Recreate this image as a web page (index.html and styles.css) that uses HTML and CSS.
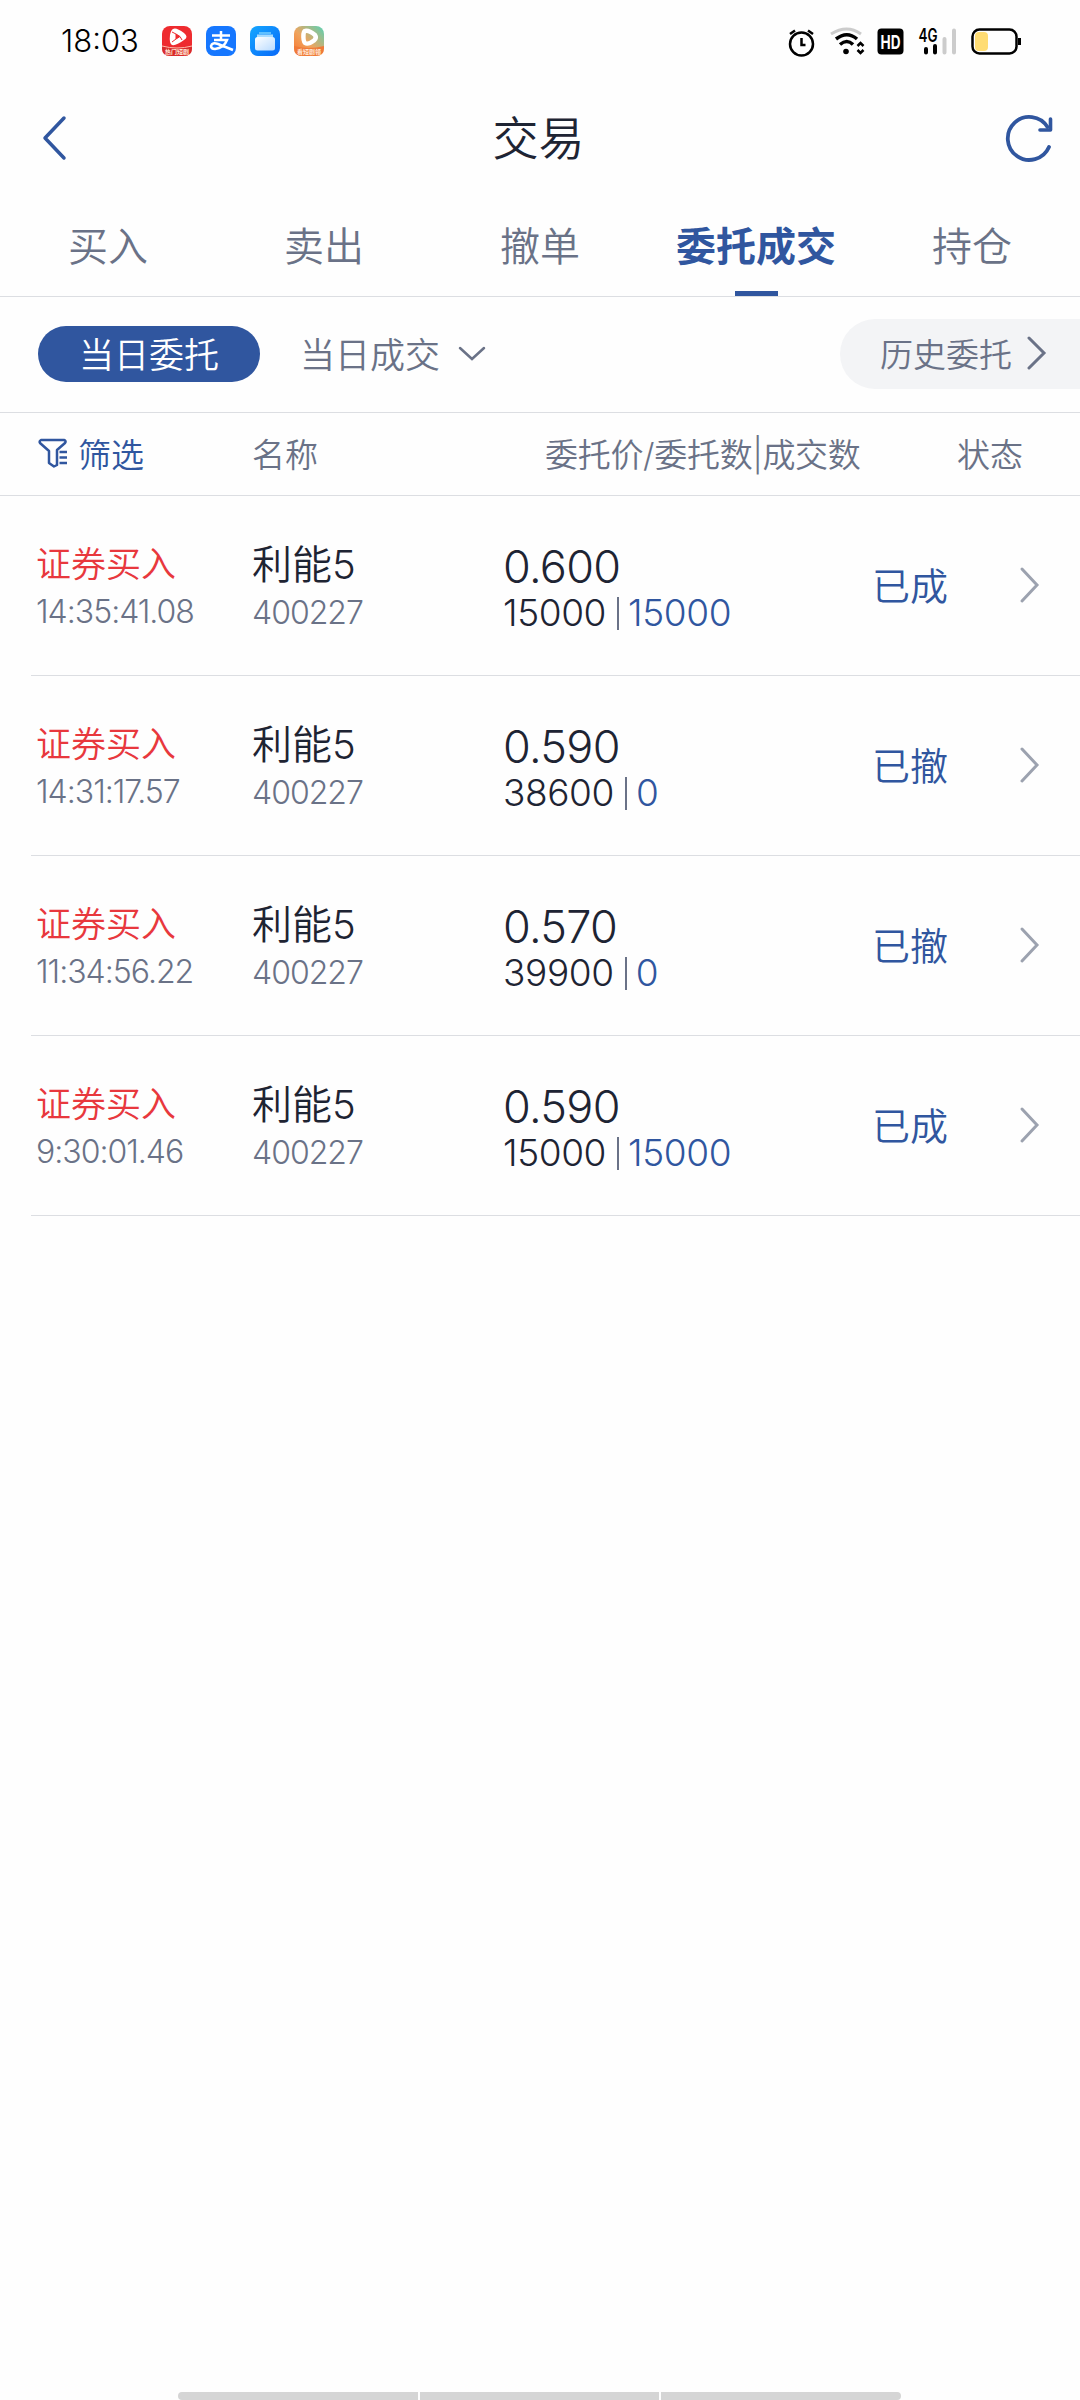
FILE: index.html
```html
<!DOCTYPE html>
<html lang="zh-CN">
<head>
    <meta charset="UTF-8">
    <meta name="viewport" content="width=device-width, initial-scale=1.0">
    <title>交易</title>
    <link rel="stylesheet" href="styles.css">
</head>
<body>
    <div class="status-bar">
        <span class="clock">18:03</span>
        <div class="app-icons">
            <svg width="30" height="30" viewBox="0 0 30 30">
                <rect width="30" height="30" rx="8" fill="#ee2b2f"/>
                <path d="M0 20Q15 24 30 20V22Q30 30 22 30H8Q0 30 0 22Z" fill="#d92a2c"/>
                <path d="M0 20Q15 24 30 20" fill="none" stroke="#ffb9a8" stroke-width="1"/>
                <path d="M11 3Q14 1 22 7Q27 11 22 14Q14 20 10 19Q7 17 8 9Q9 4 11 3Z" fill="#fff"/>
                <path d="M14 8L18 10.500L14 13ZM10 6L14 8M18 10.500L20 14M14 13L10 16" fill="#ee2b2f" stroke="#ee2b2f" stroke-width="1"/>
                <text class="icon-caption" x="15" y="28" text-anchor="middle">热门短剧</text>
            </svg>
            <svg width="30" height="30" viewBox="0 0 30 30">
                <rect width="30" height="30" rx="8" fill="#1677ff"/>
                <path d="M6 9.500H24M15 5V14M8 14H21Q18 22 9 23Q5 23 5 20Q6 16 12 18L27 24" fill="none" stroke="#fff" stroke-width="2.500"/>
            </svg>
            <svg width="30" height="30" viewBox="0 0 30 30">
                <defs>
                    <linearGradient id="blue" x1="0" y1="0" x2="1" y2="1"><stop stop-color="#15a7ff"/><stop offset="1" stop-color="#0868f8"/></linearGradient>
                    <linearGradient id="sheet" x1="0" y1="0" x2="1" y2="1"><stop stop-color="#fff"/><stop offset="1" stop-color="#b9dbff"/></linearGradient>
                    <linearGradient id="sunset" x1="0" y1="1" x2="1" y2="0"><stop stop-color="#f9722b"/><stop offset=".45" stop-color="#efa45e"/><stop offset="1" stop-color="#55d3b6"/></linearGradient>
                </defs>
                <rect width="30" height="30" rx="8" fill="url(#blue)"/>
                <path d="M9 6H21V8H9Z" fill="#5fc0ff"/>
                <path d="M7 8.500H23V11H7Z" fill="#a8dcff"/>
                <rect x="5" y="11" width="20" height="13.500" rx="2.500" fill="url(#sheet)"/>
            </svg>
            <svg width="30" height="30" viewBox="0 0 30 30">
                <rect width="30" height="30" rx="8" fill="url(#sunset)"/>
                <path d="M0 20Q15 24 30 20V22Q30 30 22 30H8Q0 30 0 22Z" fill="#f07a38"/>
                <path d="M11 5Q15 4 21 9Q23 12 20 14.500Q14 19 11 17Q9 15 9.500 8Q10 5 11 5Z" fill="none" stroke="#fff" stroke-width="4.500"/>
                <text class="icon-caption" x="15" y="28" text-anchor="middle">看短剧领</text>
            </svg>
        </div>
        <div class="system-icons">
            <svg width="270" height="40" viewBox="770 20 270 40" fill="none" stroke="#000" stroke-width="2.500">
                <circle cx="801.500" cy="43" r="11.500"/>
                <path d="M801.500 37V44H805.500M790 33L795 29.500M808 29.500L813 33"/>
                <path d="M831 33Q847 23 861 33" stroke="#ccc" stroke-width="3"/>
                <path d="M836 38Q847 29.500 857 38" stroke-width="3.500"/>
                <path d="M840 43.500Q847 37.500 853 43.500" stroke-width="3.500"/>
                <circle cx="846" cy="50.500" r="2.800" fill="#000" stroke="none"/>
                <path d="M857.500 45L860.500 42L863.500 45M857.500 49L860.500 52L863.500 49" stroke-width="2.500"/>
                <rect x="877.500" y="27.500" width="26" height="26" rx="4" fill="#000" stroke="none"/>
                <text class="hd" x="890.500" y="47.500" text-anchor="middle" textLength="20" lengthAdjust="spacingAndGlyphs">HD</text>
                <text class="net" x="918.500" y="40.500" textLength="19" lengthAdjust="spacingAndGlyphs">4G</text>
                <path d="M926 48V51.500M935 45V51.500" stroke-width="4" stroke-linecap="round"/>
                <path d="M944.500 38V51.500M954 29.500V51.500" stroke="#ccc" stroke-width="4" stroke-linecap="round"/>
                <rect x="972.500" y="28.500" width="44" height="24" rx="7"/>
                <rect x="975" y="31" width="13" height="19" rx="4" fill="#ffdc73" stroke="none"/>
                <path d="M1019.500 37V44" stroke-width="3"/>
            </svg>
        </div>
    </div>

    <header class="header">
        <svg class="back" width="26" height="46" viewBox="0 0 26 46">
            <path d="M23 3L4 23L23 43" fill="none" stroke="#30569f" stroke-width="3.500" stroke-linecap="round" stroke-linejoin="round"/>
        </svg>
        <h1>交易</h1>
        <svg class="refresh" width="50" height="50" viewBox="0 0 50 50">
            <path d="M45 34A21.500 21.500 0 1 1 43.500 14" fill="none" stroke="#30569f" stroke-width="3.800" stroke-linecap="round"/>
            <path d="M46.500 6V17H36" fill="none" stroke="#30569f" stroke-width="3.600" stroke-linecap="round" stroke-linejoin="round"/>
        </svg>
    </header>

    <nav class="tabs">
        <a class="tab">买入</a>
        <a class="tab">卖出</a>
        <a class="tab">撤单</a>
        <a class="tab active">委托成交</a>
        <a class="tab">持仓</a>
    </nav>

    <div class="filters">
        <span class="chip">当日委托</span>
        <span class="deal">当日成交</span>
        <svg class="down" width="28" height="16" viewBox="0 0 28 16">
            <path d="M2 2L14 13L26 2" fill="none" stroke="#6a7287" stroke-width="2.500" stroke-linecap="round"/>
        </svg>
        <span class="history">历史委托
            <svg width="20" height="34" viewBox="0 0 20 34">
                <path d="M2 2L17 17L2 32" fill="none" stroke="#6a7287" stroke-width="3" stroke-linecap="round"/>
            </svg>
        </span>
    </div>

    <div class="table-head">
        <span class="head-filter">
            <svg width="30" height="30" viewBox="0 0 30 30" fill="none" stroke="#30569f" stroke-width="2.500" stroke-linejoin="round">
                <path d="M3 2H26Q28.500 3 27 5L19 12V27L16 28.500L11 25V13L2 5Q1 3 3 2Z"/>
                <path d="M21.500 14H29M21.500 19.500H29M21.500 25H29"/>
            </svg>筛选</span>
        <span class="head-name">名称</span>
        <span class="head-price">委托价/委托数|成交数</span>
        <span class="head-state">状态</span>
    </div>

    <div class="orders">
        <div class="order">
            <div class="col-type"><div class="type">证券买入</div><div class="time">14:35:41.08</div></div>
            <div class="col-name"><div class="name">利能5</div><div class="code">400227</div></div>
            <div class="col-price"><div class="price">0.600</div><div class="qty">15000<i></i><b>15000</b></div></div>
            <div class="state">已成</div>
            <svg width="22" height="38" viewBox="0 0 22 38"><path d="M3 3L18 19L3 35"/></svg>
        </div>
        <div class="order">
            <div class="col-type"><div class="type">证券买入</div><div class="time">14:31:17.57</div></div>
            <div class="col-name"><div class="name">利能5</div><div class="code">400227</div></div>
            <div class="col-price"><div class="price">0.590</div><div class="qty">38600<i></i><b>0</b></div></div>
            <div class="state">已撤</div>
            <svg width="22" height="38" viewBox="0 0 22 38"><path d="M3 3L18 19L3 35"/></svg>
        </div>
        <div class="order">
            <div class="col-type"><div class="type">证券买入</div><div class="time">11:34:56.22</div></div>
            <div class="col-name"><div class="name">利能5</div><div class="code">400227</div></div>
            <div class="col-price"><div class="price">0.570</div><div class="qty">39900<i></i><b>0</b></div></div>
            <div class="state">已撤</div>
            <svg width="22" height="38" viewBox="0 0 22 38"><path d="M3 3L18 19L3 35"/></svg>
        </div>
        <div class="order">
            <div class="col-type"><div class="type">证券买入</div><div class="time">9:30:01.46</div></div>
            <div class="col-name"><div class="name">利能5</div><div class="code">400227</div></div>
            <div class="col-price"><div class="price">0.590</div><div class="qty">15000<i></i><b>15000</b></div></div>
            <div class="state">已成</div>
            <svg width="22" height="38" viewBox="0 0 22 38"><path d="M3 3L18 19L3 35"/></svg>
        </div>
    </div>

    <div class="nav-bar"><span></span><span></span><span></span></div>
</body>
</html>
```

FILE: styles.css
```css
* {
    box-sizing: border-box;
}
body {
    margin: 0;
    width: 1080px;
    height: 2400px;
    display: flex;
    flex-direction: column;
    background-color: #fefefe;
    font-family: Inter, "Noto Sans CJK SC", sans-serif;
    font-weight: 350;
    color: #1e2433;
    overflow: hidden;
}
svg {
    display: block;
    flex: none;
}
.status-bar {
    display: flex;
    align-items: center;
    height: 82px;
    padding-left: 61px;
    color: #000;
}
.clock {
    width: 101px;
    font-size: 31px;
    line-height: 40px;
}
.app-icons {
    display: flex;
    gap: 14px;
}
.icon-caption {
    font-size: 6px;
    font-weight: 700;
    fill: #ffe9d8;
}
.system-icons {
    margin-left: auto;
    padding-right: 40px;
}
.hd {
    font-size: 19px;
    font-weight: 700;
    fill: #fff;
    stroke: none;
}
.net {
    font-size: 18px;
    font-weight: 600;
    fill: #000;
    stroke: none;
}

/* title bar */
.header {
    display: flex;
    align-items: center;
    justify-content: space-between;
    height: 112px;
    padding: 0 26px 0 41px;
}
h1 {
    margin: 0 0 0 6px;
    font-size: 46px;
    font-weight: 350;
    line-height: 60px;
}
.tabs {
    display: flex;
    height: 103px;
    border-bottom: 1px solid #dcdee2;
}
.tab {
    display: flex;
    flex-direction: column;
    align-items: center;
    width: 216px;
    padding-top: 24px;
    font-size: 40px;
    line-height: 58px;
    color: #6a7287;
}
.tab.active {
    color: #30569f;
    font-weight: 600;
}
.tab.active::after {
    content: "";
    width: 43px;
    height: 5px;
    margin-top: auto;
    background-color: #30569f;
}

/* order / deal switch */
.filters {
    display: flex;
    align-items: center;
    height: 116px;
    padding: 0 0 2px 38px;
    border-bottom: 1px solid #dcdee2;
    color: #6a7287;
    font-size: 35px;
}
.chip {
    width: 222px;
    height: 56px;
    border-radius: 28px;
    background-color: #30569f;
    color: #fff;
    line-height: 59px;
    text-align: center;
}
.deal {
    margin-left: 40px;
    line-height: 56px;
    padding-top: 2px;
}
.down {
    margin-left: 18px;
}
.history {
    display: flex;
    align-items: center;
    justify-content: space-between;
    width: 240px;
    height: 70px;
    margin-left: auto;
    padding: 0 33px 2px 40px;
    border-radius: 35px 0 0 35px;
    background-color: #f3f4f6;
    font-size: 33px;
}
.table-head {
    display: flex;
    align-items: center;
    height: 83px;
    padding: 0 0 3px 38px;
    border-bottom: 1px solid #dcdee2;
    color: #6a7287;
    font-size: 33px;
}
.head-filter {
    display: flex;
    align-items: center;
    gap: 10px;
    width: 214px;
    color: #30569f;
}
.head-name {
    width: 293px;
}
.head-price {
    width: 412px;
    white-space: nowrap;
    letter-spacing: -0.3px;
}

/* order list */
.orders {
    padding-left: 31px;
}
.order {
    display: flex;
    align-items: center;
    height: 180px;
    border-bottom: 1px solid #dcdee2;
}
.col-type {
    width: 221px;
    padding: 5px 0 0 5px;
}
.type {
    font-size: 35px;
    line-height: 48px;
    color: #e8383d;
}
.time, .code {
    font-size: 32px;
    font-weight: 300;
    line-height: 48px;
    color: #6a7287;
    letter-spacing: -1px;
}
.col-name {
    width: 251px;
    padding-top: 6px;
}
.name {
    font-size: 40px;
    line-height: 48px;
}
.price {
    font-size: 45px;
    font-weight: 300;
    line-height: 48px;
    letter-spacing: -0.7px;
}
.col-price {
    width: 369px;
    padding-top: 7px;
}
.qty {
    display: flex;
    align-items: center;
    font-size: 37px;
    font-weight: 300;
    line-height: 44px;
    letter-spacing: -0.4px;
}
.qty i {
    width: 2px;
    height: 33px;
    margin: 0 9px 0 11px;
    background-color: #6a7287;
}
.qty b {
    font-weight: 300;
    color: #30569f;
}
.state {
    width: 147px;
    padding-bottom: 5px;
    font-size: 38px;
    color: #30569f;
}
.order svg {
    margin-bottom: 2px;
    fill: none;
    stroke: #9ca2af;
    stroke-width: 3;
    stroke-linecap: round;
}
.nav-bar {
    display: flex;
    gap: 2px;
    width: 723px;
    height: 8px;
    margin: auto 0 0 178px;
    border-radius: 4px;
    overflow: hidden;
}
.nav-bar span {
    flex: 1;
    background-color: #d5d5d5;
}
```
